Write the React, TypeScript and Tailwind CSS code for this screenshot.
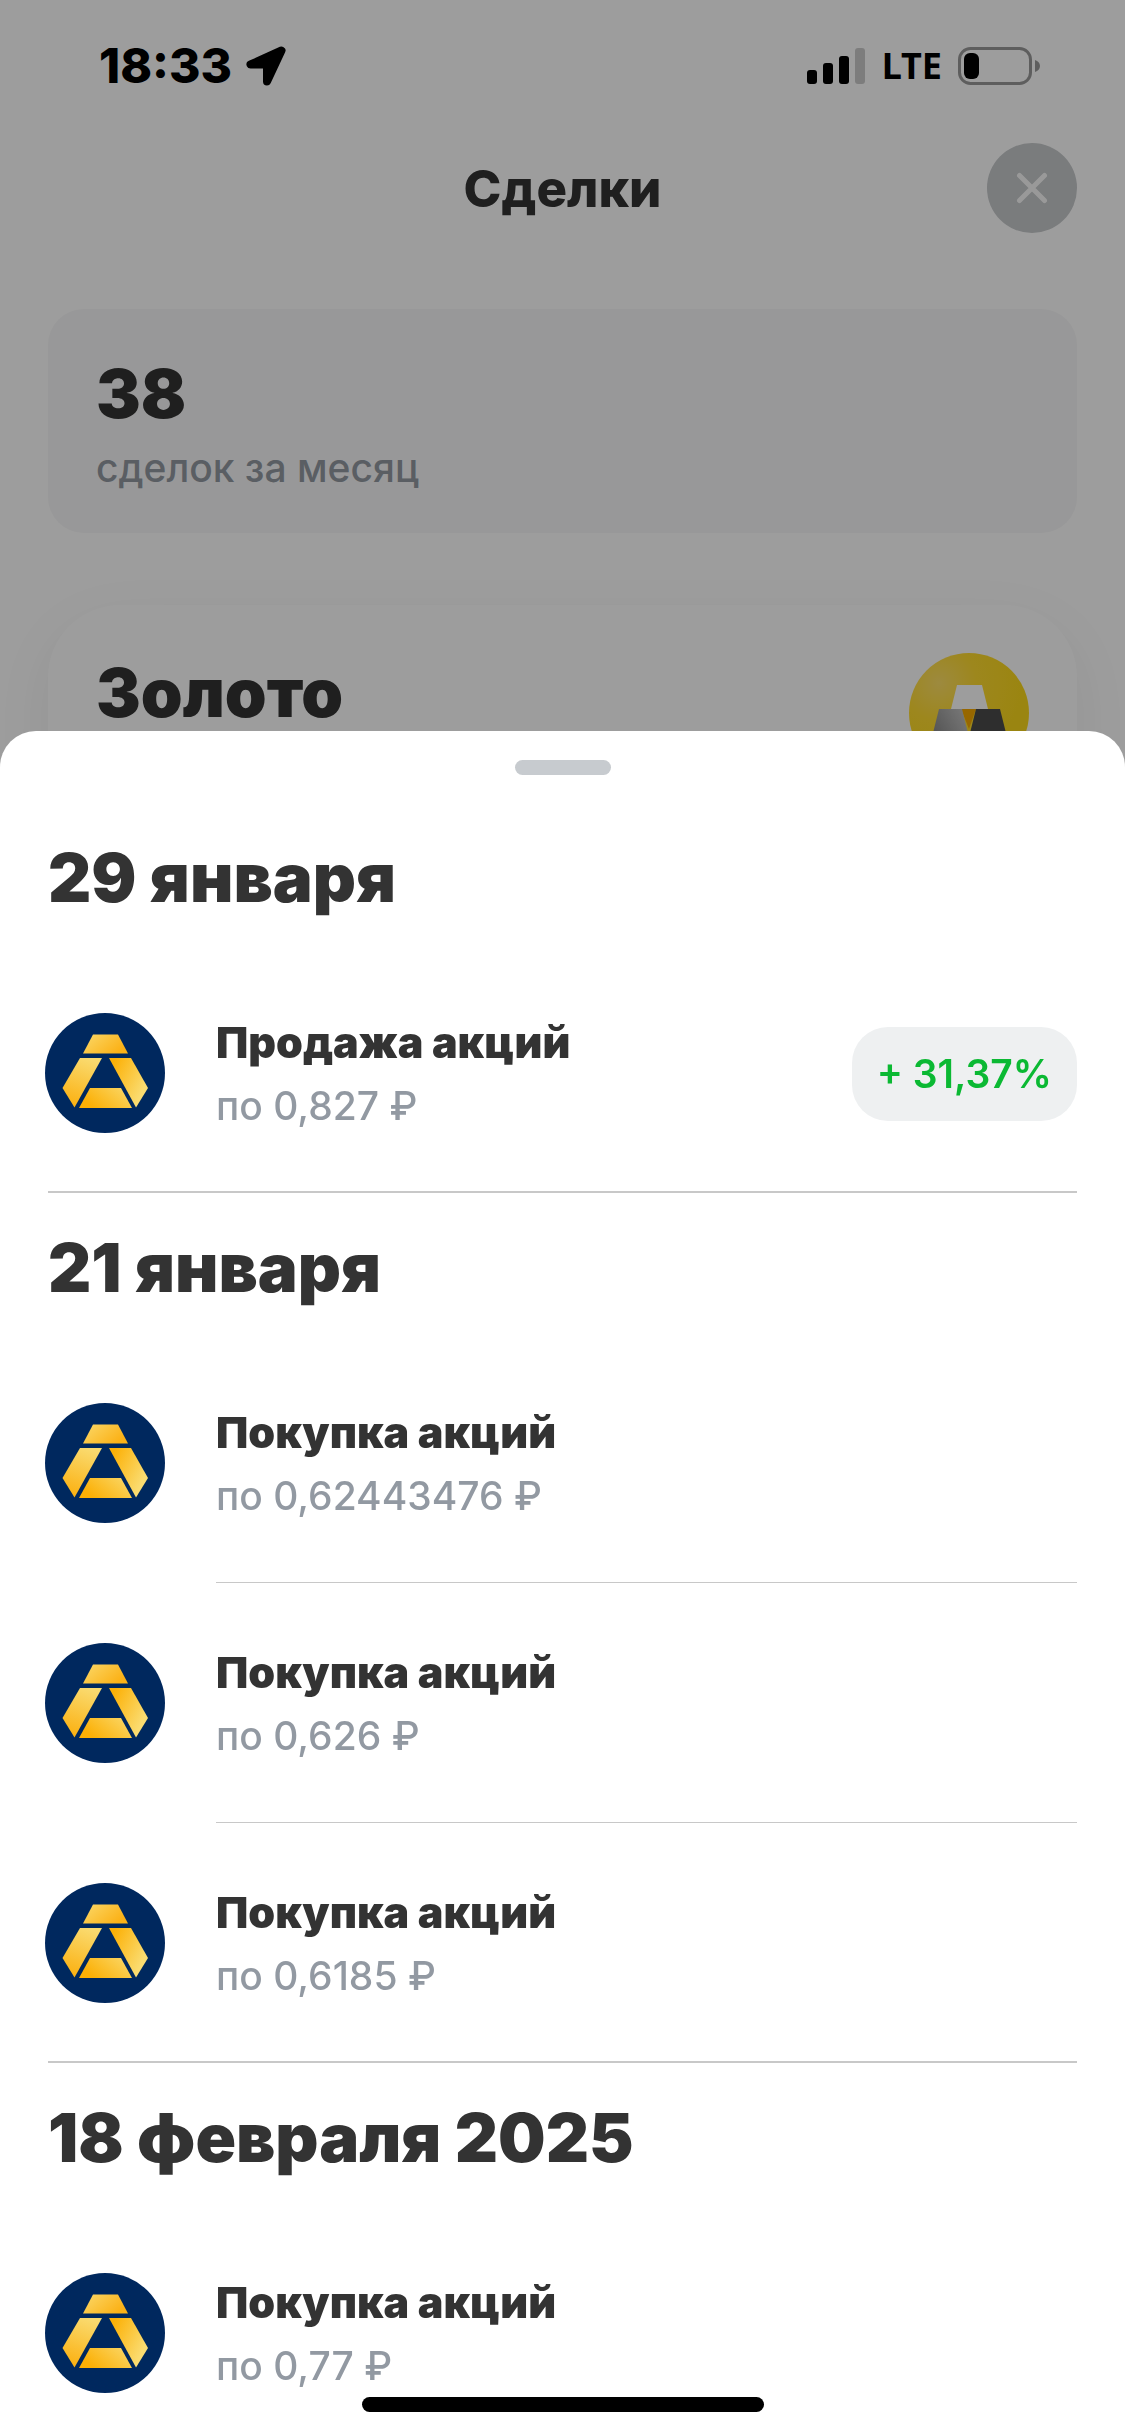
import { useId } from "react";

type Deal = {
  title: string;
  price: string;
  profit?: string;
};

type DealGroup = {
  date: string;
  deals: Deal[];
};

const groups: DealGroup[] = [
  {
    date: "29 января",
    deals: [{ title: "Продажа акций", price: "по 0,827 ₽", profit: "+ 31,37%" }],
  },
  {
    date: "21 января",
    deals: [
      { title: "Покупка акций", price: "по 0,62443476 ₽" },
      { title: "Покупка акций", price: "по 0,626 ₽" },
      { title: "Покупка акций", price: "по 0,6185 ₽" },
    ],
  },
  {
    date: "18 февраля 2025",
    deals: [{ title: "Покупка акций", price: "по 0,77 ₽" }],
  },
];

function StatusBar() {
  return (
    <div className="flex h-[132px] items-center justify-between pr-[85px] pl-[99px] text-black">
      <div className="flex items-center gap-[14px]">
        <span className="text-[48px] leading-none font-extrabold">18:33</span>
        <svg className="size-10" viewBox="0 0 40 40" aria-hidden="true">
          <path
            d="M35.500 4.500 4.500 18.500H21V35.500Z"
            fill="currentColor"
            stroke="currentColor"
            strokeWidth="8"
            strokeLinejoin="round"
          />
        </svg>
      </div>
      <div className="flex items-center gap-4">
        <svg className="h-[37px] w-[59px]" viewBox="0 0 59 37" fill="currentColor" aria-hidden="true">
          <rect x="0" y="22" width="10" height="14" rx="3" />
          <rect x="16" y="15" width="10" height="21" rx="3" />
          <rect x="32" y="8" width="10" height="28" rx="3" />
          <rect x="48" y="0" width="10" height="36" rx="3" opacity="0.2" />
        </svg>
        <span className="font-['Noto_Sans',sans-serif] text-[36px] leading-none font-bold">LTE</span>
        <svg className="h-[38px] w-[82px]" viewBox="0 0 82 38" aria-hidden="true">
          <rect x="1.5" y="1.5" width="71" height="35" rx="11" fill="none" stroke="currentColor" strokeWidth="3" opacity="0.4" />
          <rect x="6" y="6" width="15" height="26" rx="6" fill="currentColor" />
          <path d="M77 13v12c3-1 5-3 5-6s-2-5-5-6Z" fill="currentColor" opacity="0.4" />
        </svg>
      </div>
    </div>
  );
}

function GoldIcon() {
  const id = useId();
  return (
    <svg className="size-[120px] shrink-0" viewBox="0 0 120 120" aria-hidden="true">
      <defs>
        <radialGradient id={id + "bg"} cx="0.25" cy="0.25" r="0.7">
          <stop offset="0" stopColor="#ffe066" />
          <stop offset="0.45" stopColor="#ffdb30" />
          <stop offset="1" stopColor="#fbd91c" />
        </radialGradient>
        <linearGradient id={id + "bar"} x1="0" y1="0.6" x2="1" y2="0">
          <stop offset="0" stopColor="#7d7d7d" />
          <stop offset="1" stopColor="#d0d0d0" />
        </linearGradient>
      </defs>
      <circle cx="60" cy="60" r="60" fill={`url(#${id}bg)`} />
      <path d="M48 32h25l6 24H42Z" fill="#fff" />
      <path d="M52 56h15l-7 20Z" fill="#f5a800" />
      <path d="M30 56h23l12 48H18Z" fill={`url(#${id}bar)`} />
      <path d="M67 56h24l12 48H55Z" fill="#4b4b4b" />
    </svg>
  );
}

function CompanyLogo() {
  const id = useId();
  return (
    <svg className="size-[120px] shrink-0" viewBox="0 0 120 120" aria-hidden="true">
      <defs>
        <linearGradient id={id + "top"} x1="0" y1="0" x2="1" y2="0.5">
          <stop offset="0" stopColor="#fbd96a" />
          <stop offset="1" stopColor="#fbb116" />
        </linearGradient>
        <linearGradient id={id + "left"} x1="0.6" y1="0" x2="0.3" y2="1">
          <stop offset="0" stopColor="#fada6e" />
          <stop offset="1" stopColor="#fbb010" />
        </linearGradient>
        <linearGradient id={id + "right"} x1="0.1" y1="0.1" x2="0.9" y2="0.6">
          <stop offset="0" stopColor="#fcb006" />
          <stop offset="1" stopColor="#fadc70" />
        </linearGradient>
        <linearGradient id={id + "bottom"} x1="0.1" y1="0.6" x2="1" y2="0.2">
          <stop offset="0" stopColor="#fcb006" />
          <stop offset="1" stopColor="#fad766" />
        </linearGradient>
      </defs>
      <circle cx="60" cy="60" r="60" fill="#00285e" />
      <path d="M48 21.500h25l10 19H38Z" fill={`url(#${id}top)`} />
      <path d="M35 45h22L29.500 94.500 17.500 75Z" fill={`url(#${id}left)`} />
      <path d="M64 45h22l17 30-12 19.500Z" fill={`url(#${id}right)`} />
      <path d="M45 75h31l11 20H34Z" fill={`url(#${id}bottom)`} />
    </svg>
  );
}

function DealRow({ deal, last }: { deal: Deal; last: boolean }) {
  return (
    <li className={last ? "border-b-2 border-[#c8c8c8]" : ""}>
      <div className="-ml-[3px] flex gap-[51px]">
        <div className={last ? "flex h-[238px] items-center pt-0.5" : "flex h-[240px] items-center"}>
          <CompanyLogo />
        </div>
        <div
          className={
            last
              ? "flex h-[238px] flex-1 items-center justify-between pt-1"
              : "flex h-[240px] flex-1 items-center justify-between border-b border-[#c8c8c8] pt-1"
          }
        >
          <div className="flex flex-col gap-2">
            <h3 className="text-[43px] leading-[56px] font-black">{deal.title}</h3>
            <p className="text-[39px] leading-[56px] font-medium text-[#9299a2]">{deal.price}</p>
          </div>
          {deal.profit && (
            <span className="rounded-[36px] bg-[#eef0f1] px-[25px] py-5 text-[39px] leading-[54px] font-semibold text-[#0bb933]">
              {deal.profit}
            </span>
          )}
        </div>
      </div>
    </li>
  );
}

function DealsSheet() {
  return (
    <section
      role="dialog"
      aria-label="История сделок"
      className="flex h-[70vh] flex-col overflow-hidden rounded-t-[36px] bg-white text-[#333]"
    >
      <div className="flex h-[72px] shrink-0 justify-center pt-[29px]">
        <div className="h-[15px] w-24 rounded-full bg-[#c7cbcf]" />
      </div>
      <div className="px-12">
        {groups.map((group) => (
          <section key={group.date}>
            <h2 className="flex h-[150px] items-center text-[67px] leading-none font-black">{group.date}</h2>
            <ul>
              {group.deals.map((deal, i) => (
                <DealRow key={deal.price} deal={deal} last={i === group.deals.length - 1} />
              ))}
            </ul>
          </section>
        ))}
      </div>
    </section>
  );
}

export default function App() {
  return (
    <div className="h-screen overflow-hidden bg-white font-['Inter','Noto_Sans',sans-serif] text-[#333]">
      <StatusBar />
      <header className="grid grid-cols-[1fr_auto_1fr] items-center px-12 pt-[11px]">
        <h1 className="col-start-2 text-[51px] leading-none font-extrabold">Сделки</h1>
        <button
          type="button"
          aria-label="Закрыть"
          className="flex size-[90px] items-center justify-center justify-self-end rounded-full bg-[#c6c9cb]"
        >
          <svg className="size-9" viewBox="0 0 36 36" fill="none" stroke="#fff" strokeWidth="5" strokeLinecap="round" opacity="0.9">
            <path d="m5.500 5.500 25 25M30.500 5.500l-25 25" />
          </svg>
        </button>
      </header>

      <main className="flex flex-col gap-[72px] px-12 pt-[76px]">
        <section className="flex h-[224px] flex-col justify-center rounded-[36px] bg-[#f7f7f8] px-12 pt-[14px]">
          <p className="text-[67px] leading-[80px] font-black">38</p>
          <p className="text-[39px] leading-[68px] font-medium text-[#9299a2]">сделок за месяц</p>
        </section>
        <section className="flex h-[480px] items-start justify-between rounded-[72px] bg-white px-12 pt-12 shadow-[0_18px_60px_rgba(0,0,0,0.06)]">
          <h2 className="text-[67px] leading-[80px] font-black">Золото</h2>
          <GoldIcon />
        </section>
      </main>

      <div className="fixed inset-0 flex flex-col justify-end bg-black/[0.385]">
        <DealsSheet />
        <div className="absolute inset-x-0 bottom-6 flex justify-center">
          <div className="h-[15px] w-[402px] rounded-full bg-black" />
        </div>
      </div>
    </div>
  );
}
